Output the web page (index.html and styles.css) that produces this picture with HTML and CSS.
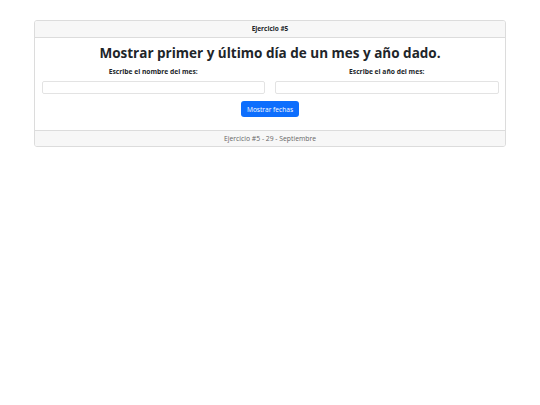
FILE: index.html
```html
<!DOCTYPE html>
<html lang="es">
<head>
<meta charset="utf-8">
<title>Ejercicio #5</title>
<link rel="stylesheet" href="styles.css">
</head>
<body>
<div class="card">
  <div class="card-header">Ejercicio #5</div>
  <div class="card-body">
    <h1 class="title">Mostrar primer y último día de un mes y año dado.</h1>
    <div class="row">
      <div class="col">
        <label class="label">Escribe el nombre del mes:</label>
        <input class="input" type="text">
      </div>
      <div class="col">
        <label class="label">Escribe el año del mes:</label>
        <input class="input" type="text">
      </div>
    </div>
    <div class="actions">
      <button class="btn" type="button">Mostrar fechas</button>
    </div>
  </div>
  <div class="card-footer">Ejercicio #5 - 29 - Septiembre</div>
</div>
</body>
</html>
```
FILE: styles.css
```css
html, body {
  margin: 0;
  padding: 0;
  background: #fff;
}
body {
  font-family: "Open Sans", "Noto Sans", sans-serif;
  color: #212529;
  padding-top: 20px;
}
.card {
  margin-left: 34px;
  width: 472px;
  box-sizing: border-box;
  border: 1px solid #dcdcdc;
  border-radius: 3px;
  overflow: hidden;
}
.card-header {
  height: 16px;
  line-height: 16px;
  background: #f7f7f7;
  border-bottom: 1px solid #dcdcdc;
  text-align: center;
  font-size: 6.5px;
  font-weight: 700;
}
.card-body {
  padding: 5.5px 6.5px 13px;
}
.title {
  margin: 0;
  text-align: center;
  font-size: 13.5px;
  font-weight: 700;
  line-height: 18px;
}
.row {
  display: flex;
  gap: 10px;
  margin-top: 5px;
}
.col {
  flex: 1;
  display: flex;
  flex-direction: column;
  align-items: center;
}
.label {
  font-size: 6.7px;
  font-weight: 700;
  line-height: 10px;
  margin-bottom: 4.5px;
}
.input {
  box-sizing: border-box;
  width: 100%;
  height: 12.5px;
  border: 1px solid #e3e3e3;
  border-radius: 2px;
  margin: 0;
  padding: 0;
}
.actions {
  display: flex;
  justify-content: center;
  margin-top: 7.5px;
}
.btn {
  font-family: inherit;
  background: #0d6efd;
  color: #fff;
  border: none;
  border-radius: 3px;
  width: 58px;
  height: 16px;
  font-size: 6.6px;
  padding: 0;
}
.card-footer {
  height: 15px;
  line-height: 15px;
  background: #f7f7f7;
  border-top: 1px solid #dcdcdc;
  text-align: center;
  font-size: 6.8px;
  color: #666;
}
```
